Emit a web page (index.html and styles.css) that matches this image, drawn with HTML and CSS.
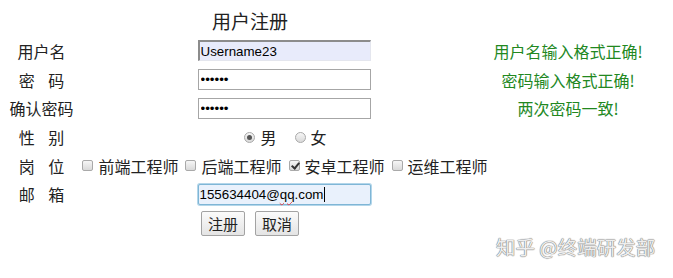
FILE: index.html
```html
<!DOCTYPE html>
<html lang="zh-CN">
  <head>
    <meta charset="UTF-8" />
    <meta name="viewport" content="width=device-width, initial-scale=1.0" />
    <title>用户注册</title>
    <link rel="stylesheet" href="styles.css">
  </head>

  <body>
    <form class="register">
      <h2 class="title">用户注册</h2>

      <label class="name" for="user">用户名</label>
      <div class="cell"><input class="field autofill" id="user" type="text" value="Username23" /></div>
      <div class="msg">用户名输入格式正确!</div>

      <label class="name" for="pwd">密<span class="sp">&nbsp;&nbsp;&nbsp;</span>码</label>
      <div class="cell"><input class="field" id="pwd" type="password" value="123456" /></div>
      <div class="msg">密码输入格式正确!</div>

      <label class="name" for="pwd2">确认密码</label>
      <div class="cell"><input class="field" id="pwd2" type="password" value="123456" /></div>
      <div class="msg">两次密码一致!</div>

      <div class="name">性<span class="sp">&nbsp;&nbsp;&nbsp;</span>别</div>
      <div class="cell options radios">
        <label><input type="radio" name="sex" checked /><span>男</span></label>
        <label><input type="radio" name="sex" /><span>女</span></label>
      </div>
      <div class="msg"></div>

      <div class="name">岗<span class="sp">&nbsp;&nbsp;&nbsp;</span>位</div>
      <div class="cell options checks">
        <label><input type="checkbox" /><span>前端工程师</span></label>
        <label><input type="checkbox" /><span>后端工程师</span></label>
        <label><input type="checkbox" checked /><span>安卓工程师</span></label>
        <label><input type="checkbox" /><span>运维工程师</span></label>
      </div>
      <div class="msg"></div>

      <div class="name">邮<span class="sp">&nbsp;&nbsp;&nbsp;</span>箱</div>
      <div class="cell">
        <div class="field email">155634404@<span class="typo">qq</span>.com<span class="caret"></span></div>
      </div>
      <div class="msg"></div>

      <div class="actions">
        <button type="submit">注册</button>
        <button type="reset">取消</button>
      </div>
    </form>

    <div class="mark">知乎 @终端研发部</div>
  </body>
</html>
```

FILE: styles.css
```css
html,
body {
  margin: 0;
  background: #fff;
}

body {
  position: relative;
  width: 673px;
  height: 278px;
  overflow: hidden;
  font-family: "Noto Sans CJK SC", "Liberation Sans", sans-serif;
  font-size: 16px;
  color: #222;
}

.register {
  display: grid;
  grid-template-columns: 67px 417px 152px;
  grid-template-rows: 31.6px;
  grid-auto-rows: 28.7px;
  padding: 5px 0 0 8px;
}

.title {
  grid-column: 1 / 3;
  margin: 0;
  font-size: 19px;
  font-weight: normal;
  line-height: 1;
  display: flex;
  align-items: center;
  justify-content: center;
}

.name {
  grid-column: 1;
  display: flex;
  align-items: center;
  justify-content: center;
  white-space: nowrap;
  line-height: 1;
}

.sp {
  font-family: "Liberation Sans", sans-serif;
}

.cell {
  grid-column: 2;
  display: flex;
  align-items: center;
  justify-content: center;
  white-space: nowrap;
}

.msg {
  grid-column: 3;
  display: flex;
  align-items: center;
  justify-content: center;
  color: #22881f;
  line-height: 1;
  white-space: nowrap;
}

.field {
  box-sizing: border-box;
  width: 173px;
  height: 21px;
  margin: 0 0 0 1px;
  padding: 0 2px;
  border: 1px solid #a6a6a6;
  font-family: "Liberation Sans", sans-serif;
  font-size: 13.33px;
  color: #000;
  background: #fff;
  outline: none;
}

.autofill {
  background: #e8ebfb;
  border-top: 2px solid #8c8c8c;
  border-left: 2px solid #8c8c8c;
  border-right: 1px solid #e4e6ee;
  border-bottom: 1px solid #e4e6ee;
  padding-left: 1px;
}

.email {
  display: flex;
  align-items: center;
  background: #e9f1fc;
  border: 1px solid #7fb6d6;
  border-radius: 2px;
  box-shadow: 0 0 0 1px #b3d6ea;
  padding-left: 1px;
}

.typo {
  text-decoration: underline wavy #e0404a;
  text-decoration-thickness: 1px;
  text-underline-offset: 2px;
}

.caret {
  display: inline-block;
  width: 1px;
  height: 15px;
  margin-left: 1px;
  background: #000;
}

.options label {
  display: flex;
  align-items: center;
  line-height: 1;
}

.radios {
  gap: 18px;
  padding-left: 4px;
}

.radios label {
  gap: 5px;
}

.checks {
  gap: 7px;
  padding-left: 3px;
}

.checks label {
  gap: 5px;
}

.options input {
  appearance: none;
  margin: 0;
  width: 11px;
  height: 11px;
  border: 1px solid #a9a9a9;
  background: linear-gradient(#f6f6f6, #d9d9d9);
  box-sizing: border-box;
  position: relative;
}

.radios input {
  border-radius: 50%;
}

.radios input:checked::after {
  content: "";
  position: absolute;
  left: 2px;
  top: 2px;
  width: 5px;
  height: 5px;
  border-radius: 50%;
  background: #555;
}

.checks input {
  border-radius: 2px;
}

.checks input:checked::after {
  content: "";
  position: absolute;
  left: 3px;
  top: 0px;
  width: 3px;
  height: 6px;
  border: solid #333;
  border-width: 0 2px 2px 0;
  transform: rotate(40deg);
}

.actions {
  grid-column: 1 / 3;
  display: flex;
  justify-content: center;
  align-items: center;
  gap: 10px;
}

.actions button {
  height: 25px;
  padding: 0 6px;
  border: 1px solid #a3a3a3;
  border-radius: 2px;
  background: linear-gradient(#fbfbfb, #e4e4e4);
  font-family: "Noto Sans CJK SC", sans-serif;
  font-size: 15px;
  line-height: 1;
  color: #222;
}

.mark {
  position: absolute;
  left: 496px;
  top: 235px;
  font-size: 19.5px;
  line-height: 24px;
  color: #eeeeee;
  text-shadow: 0 0 1px #777, 0 0 1px #888, 0 0 1px #999;
  white-space: nowrap;
}
```
